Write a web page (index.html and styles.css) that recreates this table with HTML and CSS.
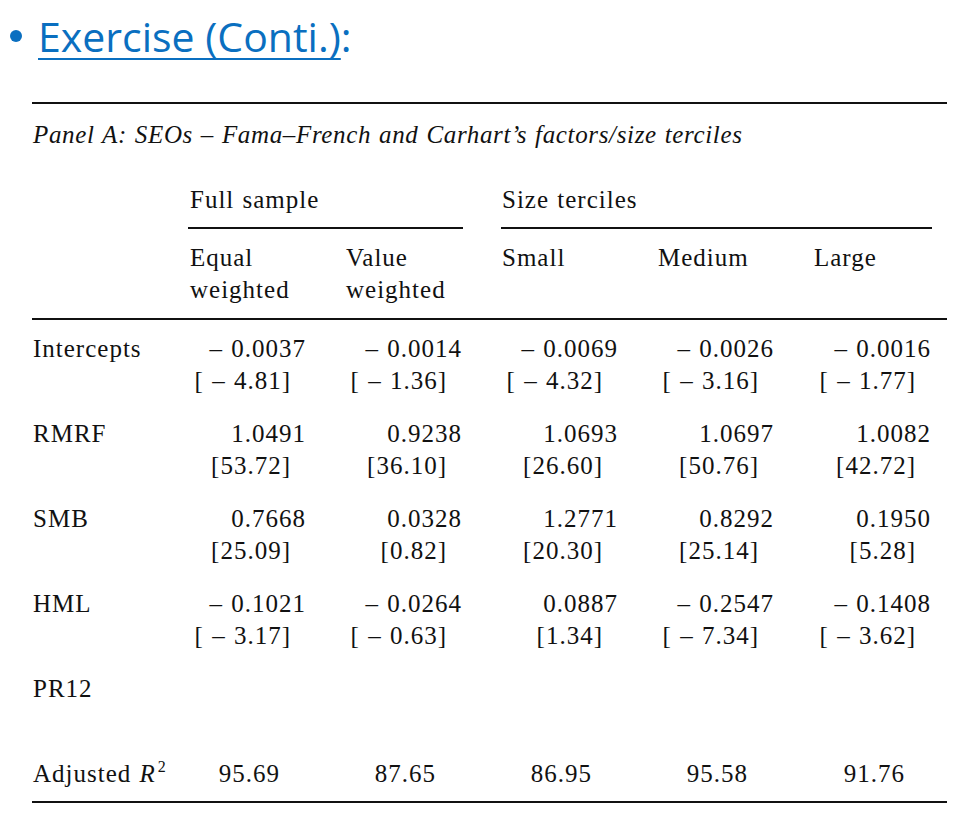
FILE: index.html
```html
<!DOCTYPE html>
<html lang="en">
<head>
<meta charset="utf-8">
<title>Exercise (Conti.)</title>
<link rel="stylesheet" href="styles.css">
</head>
<body>
<div class="slide">
  <div class="title">
    <span class="bullet"></span>
    <h1 class="heading"><a class="link">Exercise (Conti.)</a>:</h1>
  </div>

  <div class="tbl">
    <div class="caption">Panel A: SEOs – Fama–French and Carhart’s factors/size terciles</div>

    <div class="grid groups">
      <div></div>
      <div class="grp grp-full">Full sample</div>
      <div class="grp grp-size">Size terciles</div>
    </div>

    <div class="grid heads">
      <div></div>
      <div class="head">Equal<br>weighted</div>
      <div class="head">Value<br>weighted</div>
      <div class="head">Small</div>
      <div class="head">Medium</div>
      <div class="head">Large</div>
    </div>

    <div class="body">
      <div class="grid row">
        <div class="label">Intercepts</div>
        <div class="val"><span class="coef">– 0.0037</span><span class="t">[ – 4.81]</span></div>
        <div class="val"><span class="coef">– 0.0014</span><span class="t">[ – 1.36]</span></div>
        <div class="val"><span class="coef">– 0.0069</span><span class="t">[ – 4.32]</span></div>
        <div class="val"><span class="coef">– 0.0026</span><span class="t">[ – 3.16]</span></div>
        <div class="val last"><span class="coef">– 0.0016</span><span class="t">[ – 1.77]</span></div>
      </div>
      <div class="grid row">
        <div class="label">RMRF</div>
        <div class="val"><span class="coef">1.0491</span><span class="t">[53.72]</span></div>
        <div class="val"><span class="coef">0.9238</span><span class="t">[36.10]</span></div>
        <div class="val"><span class="coef">1.0693</span><span class="t">[26.60]</span></div>
        <div class="val"><span class="coef">1.0697</span><span class="t">[50.76]</span></div>
        <div class="val last"><span class="coef">1.0082</span><span class="t">[42.72]</span></div>
      </div>
      <div class="grid row">
        <div class="label">SMB</div>
        <div class="val"><span class="coef">0.7668</span><span class="t">[25.09]</span></div>
        <div class="val"><span class="coef">0.0328</span><span class="t">[0.82]</span></div>
        <div class="val"><span class="coef">1.2771</span><span class="t">[20.30]</span></div>
        <div class="val"><span class="coef">0.8292</span><span class="t">[25.14]</span></div>
        <div class="val last"><span class="coef">0.1950</span><span class="t">[5.28]</span></div>
      </div>
      <div class="grid row">
        <div class="label">HML</div>
        <div class="val"><span class="coef">– 0.1021</span><span class="t">[ – 3.17]</span></div>
        <div class="val"><span class="coef">– 0.0264</span><span class="t">[ – 0.63]</span></div>
        <div class="val"><span class="coef">0.0887</span><span class="t">[1.34]</span></div>
        <div class="val"><span class="coef">– 0.2547</span><span class="t">[ – 7.34]</span></div>
        <div class="val last"><span class="coef">– 0.1408</span><span class="t">[ – 3.62]</span></div>
      </div>
      <div class="grid row row-empty">
        <div class="label">PR12</div>
      </div>
      <div class="grid row row-r2">
        <div class="label">Adjusted <i class="math">R</i><sup class="sup">2</sup></div>
        <div class="val"><span class="r2">95.69</span></div>
        <div class="val"><span class="r2">87.65</span></div>
        <div class="val"><span class="r2">86.95</span></div>
        <div class="val"><span class="r2">95.58</span></div>
        <div class="val last"><span class="r2">91.76</span></div>
      </div>
    </div>
  </div>
</div>
</body>
</html>
```

FILE: styles.css
```css
html, body {
  margin: 0;
  padding: 0;
  background: #ffffff;
}

.slide {
  width: 961px;
  height: 816px;
  overflow: hidden;
}

/* ---------- title ---------- */
.title {
  display: flex;
  align-items: center;
  padding-top: 12px;
  padding-left: 10px;
  height: 48px;
}

.bullet {
  width: 12px;
  height: 12px;
  border-radius: 50%;
  background: #0a6fc0;
  margin-right: 16px;
  flex: none;
}

.heading {
  margin: 0;
  font-family: "Open Sans", "Noto Sans", sans-serif;
  font-weight: 400;
  font-size: 41px;
  line-height: 48px;
  color: #0a6fc0;
}

.link {
  color: #0a6fc0;
  text-decoration: underline;
  text-decoration-thickness: 2px;
  text-underline-offset: 6px;
}

/* ---------- table ---------- */
.tbl {
  margin-top: 42px;
  margin-left: 32px;
  width: 915px;
  border-top: 2px solid #111111;
  border-bottom: 2px solid #111111;
  font-family: "Liberation Serif", "Times New Roman", serif;
  font-size: 25px;
  line-height: 32px;
  letter-spacing: 1px;
  word-spacing: 1px;
  color: #111111;
}

.caption {
  font-style: italic;
  letter-spacing: 0.65px;
  padding-top: 15px;
  padding-left: 1px;
  height: 32px;
  white-space: nowrap;
}

.grid {
  display: grid;
  grid-template-columns: 156px 156px 156px 156px 156px 135px;
}

.groups {
  margin-top: 33px;
}

.grp {
  padding-left: 2px;
  padding-bottom: 11px;
  border-bottom: 2px solid #111111;
}

.grp-full {
  grid-column: span 2;
  margin-right: 37px;
}

.grp-size {
  grid-column: span 3;
  margin-left: 1px;
  margin-right: 15px;
  padding-left: 1px;
}

.heads {
  padding-top: 13px;
  padding-bottom: 12px;
  border-bottom: 2px solid #111111;
}

.head {
  padding-left: 2px;
}

.body {
  padding-top: 13px;
  padding-bottom: 11px;
}

.row {
  padding-bottom: 21px;
}

.row-empty {
  height: 64px;
}

.row-r2 {
  padding-bottom: 0;
}

.label {
  padding-left: 1px;
  white-space: nowrap;
}

.val {
  text-align: right;
  padding-right: 38px;
  white-space: nowrap;
}

.val.last {
  padding-right: 16px;
}

.coef,
.t,
.r2 {
  display: block;
}

.t {
  padding-right: 15px;
}

.r2 {
  padding-right: 26px;
}

.math {
  font-style: italic;
}

.sup {
  font-size: 16px;
  line-height: 0;
  vertical-align: 10px;
  margin-left: 2px;
}
```
